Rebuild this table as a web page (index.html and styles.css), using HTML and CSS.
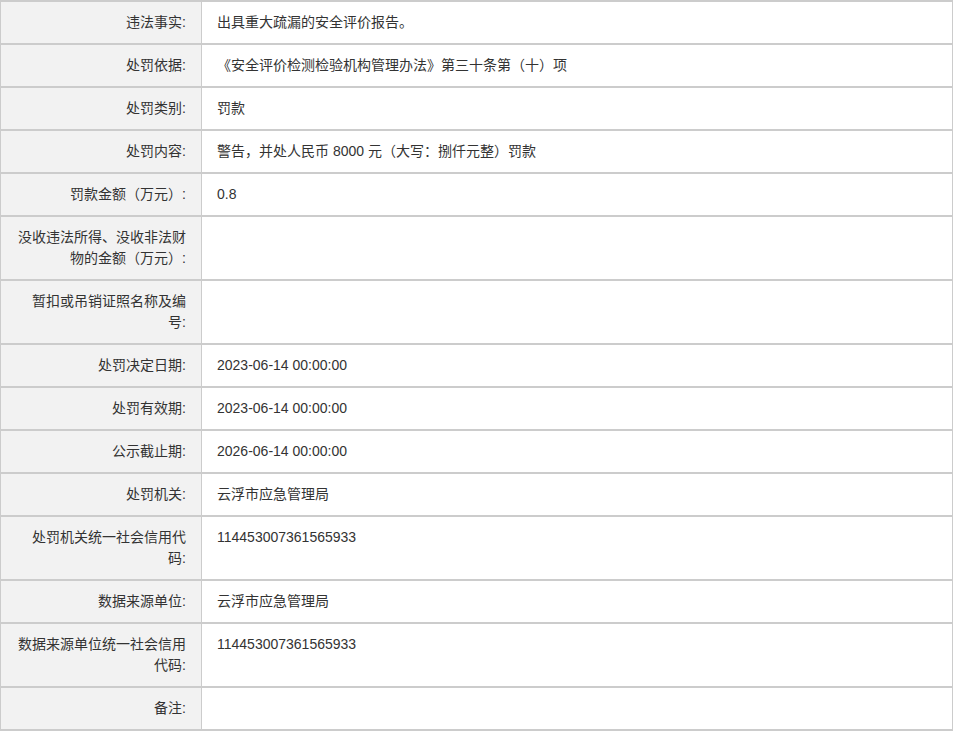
FILE: index.html
```html
<!DOCTYPE html>
<html lang="zh">
<head>
<meta charset="utf-8">
<link rel="stylesheet" href="styles.css">
</head>
<body>
<table class="info">
  <colgroup><col class="c-label"><col class="c-value"></colgroup>
  <tbody>
    <tr><th>违法事实:</th><td>出具重大疏漏的安全评价报告。</td></tr>
    <tr><th>处罚依据:</th><td>《安全评价检测检验机构管理办法》第三十条第（十）项</td></tr>
    <tr><th>处罚类别:</th><td>罚款</td></tr>
    <tr><th>处罚内容:</th><td>警告，并处人民币 8000 元（大写：捌仟元整）罚款</td></tr>
    <tr><th>罚款金额（万元）:</th><td>0.8</td></tr>
    <tr><th>没收违法所得、没收非法财物的金额（万元）:</th><td></td></tr>
    <tr><th>暂扣或吊销证照名称及编号:</th><td></td></tr>
    <tr><th>处罚决定日期:</th><td>2023-06-14 00:00:00</td></tr>
    <tr><th>处罚有效期:</th><td>2023-06-14 00:00:00</td></tr>
    <tr><th>公示截止期:</th><td>2026-06-14 00:00:00</td></tr>
    <tr><th>处罚机关:</th><td>云浮市应急管理局</td></tr>
    <tr><th>处罚机关统一社会信用代码:</th><td>114453007361565933</td></tr>
    <tr><th>数据来源单位:</th><td>云浮市应急管理局</td></tr>
    <tr><th>数据来源单位统一社会信用代码:</th><td>114453007361565933</td></tr>
    <tr><th>备注:</th><td></td></tr>
  </tbody>
</table>
</body>
</html>
```

FILE: styles.css
```css
html, body {
  margin: 0;
  padding: 0;
  background: #ffffff;
}

.info {
  width: 953px;
  table-layout: fixed;
  border-collapse: collapse;
  font-family: "Liberation Sans", "Noto Sans CJK SC", sans-serif;
  font-size: 14px;
  line-height: 21px;
  color: #333333;
  border-left: 1px solid #cccccc;
  border-right: 1px solid #cccccc;
  border-top: 2px solid #cccccc;
}

.c-label { width: 201px; }

.info tr {
  border-bottom: 2px solid #cccccc;
}

.info th {
  background: #f2f2f2;
  font-weight: normal;
  text-align: right;
  vertical-align: top;
  padding: 10px 15px 10px 15px;
  border-right: 1px solid #cccccc;
  height: 21px;
}

.info td {
  text-align: left;
  vertical-align: top;
  padding: 10px 15px;
}
```
